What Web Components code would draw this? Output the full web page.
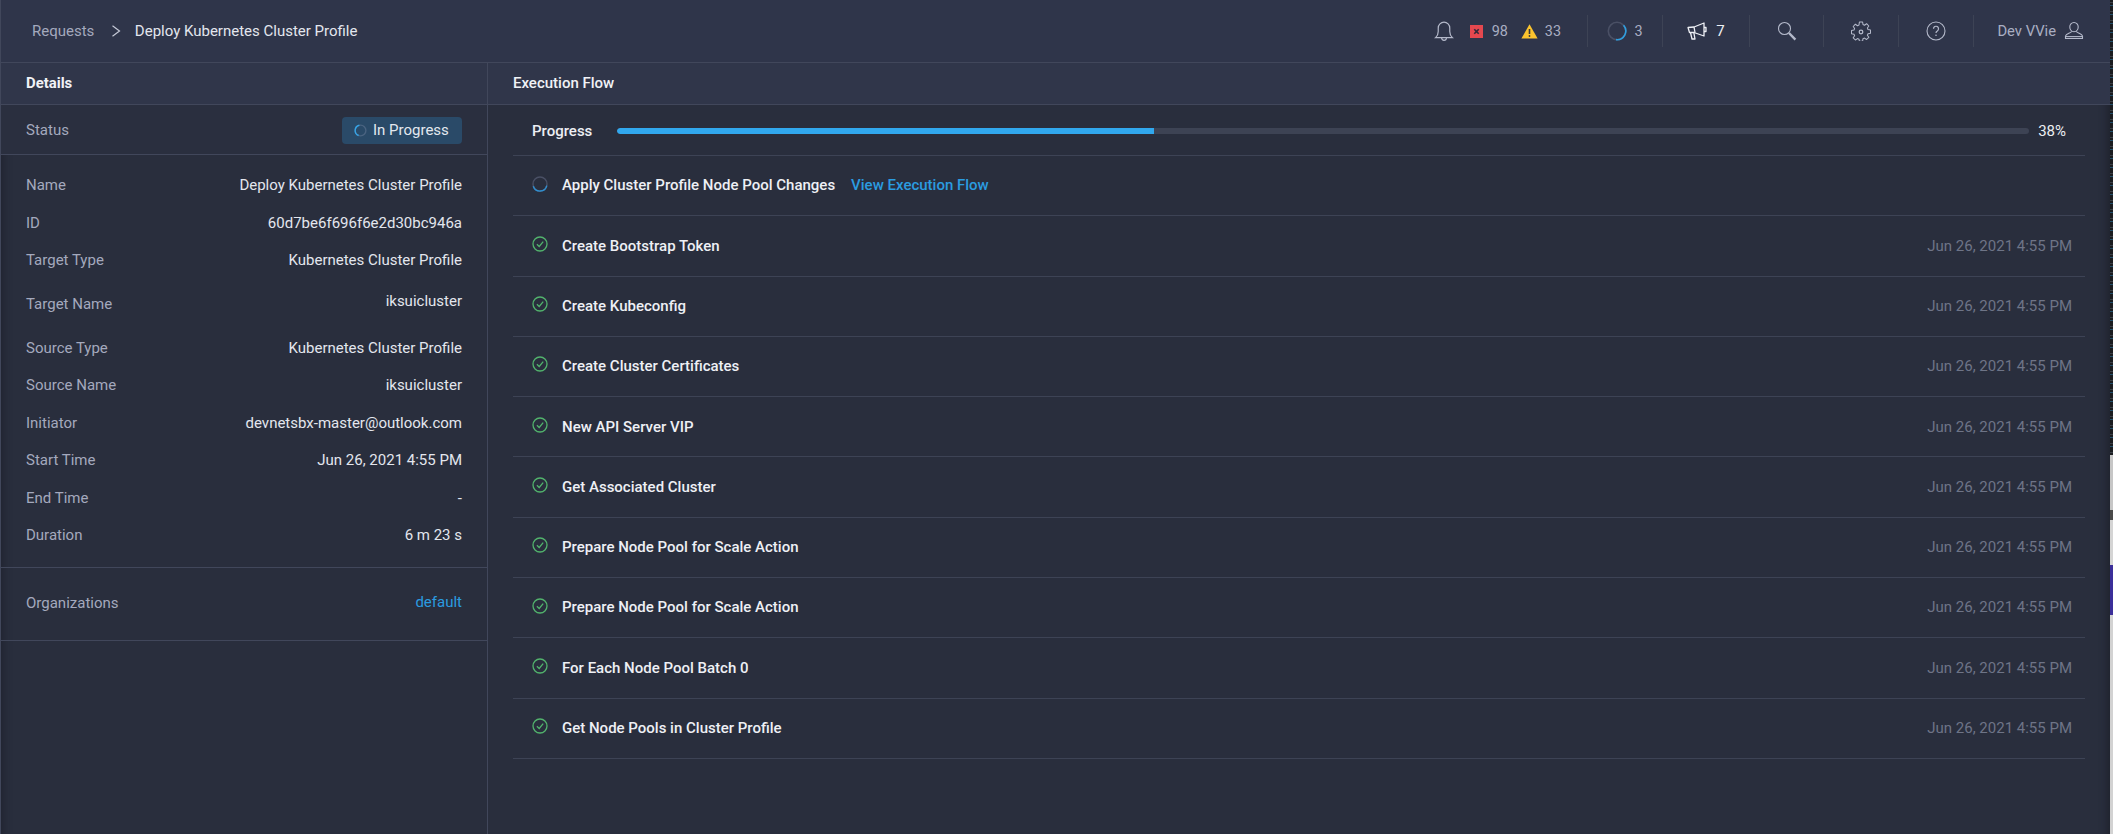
<!DOCTYPE html>
<html><head><meta charset="utf-8"><title>Request</title>
<style>
html,body{margin:0;height:100%;background:#292e3d;overflow:hidden}
body{font-family:Roboto,"Liberation Sans",sans-serif;font-size:15px;color:#e3e6ee}
</style></head><body>
<x-app>
  <x-topbar slot="top">
    <x-crumbs><span slot="parent">Requests</span><span slot="current">Deploy Kubernetes Cluster Profile</span></x-crumbs>
    <x-tool slot="tools" w="166" end style="padding-right:26px">
      <x-icon name="bell" size="24" style="color:#b4b9ca;margin-right:14px"></x-icon>
      <x-icon name="err" size="13" style="margin-right:9px"></x-icon><span style="margin-right:13px">98</span>
      <x-icon name="warn" size="17" style="margin-right:7px"></x-icon><span>33</span>
    </x-tool>
    <x-tool slot="tools" w="75" sep><x-icon name="spin" size="20" style="margin-right:7px"></x-icon><span>3</span></x-tool>
    <x-tool slot="tools" w="87" sep><x-icon name="mega" size="20" style="margin-right:9px;color:#eef0f5"></x-icon><span style="color:#eef0f5;font-size:15px">7</span></x-tool>
    <x-tool slot="tools" w="74" sep><x-icon name="search" size="20" style="color:#b4b9ca"></x-icon></x-tool>
    <x-tool slot="tools" w="75" sep><x-icon name="gear" size="20" style="color:#b4b9ca"></x-icon></x-tool>
    <x-tool slot="tools" w="75" sep><x-icon name="help" size="20" style="color:#b4b9ca"></x-icon></x-tool>
    <x-tool slot="tools" w="115" sep end style="padding-right:4px"><span style="margin-right:8px;font-size:14.800px">Dev VVie</span><x-icon name="user" size="20" style="color:#b4b9ca"></x-icon></x-tool>
  </x-topbar>

  <x-details slot="left">
    <x-head><b style="font-weight:700;font-size:14.900px">Details</b></x-head>
    <x-status-row><x-badge>In Progress</x-badge></x-status-row>
    <x-list>
      <x-kv k="Name">Deploy Kubernetes Cluster Profile</x-kv>
      <x-kv k="ID">60d7be6f696f6e2d30bc946a</x-kv>
      <x-kv k="Target Type">Kubernetes Cluster Profile</x-kv>
      <x-kv k="Target Name" tall>iksuicluster</x-kv>
      <x-kv k="Source Type">Kubernetes Cluster Profile</x-kv>
      <x-kv k="Source Name">iksuicluster</x-kv>
      <x-kv k="Initiator">devnetsbx-master@outlook.com</x-kv>
      <x-kv k="Start Time">Jun 26, 2021 4:55 PM</x-kv>
      <x-kv k="End Time">-</x-kv>
      <x-kv k="Duration">6 m 23 s</x-kv>
    </x-list>
    <x-org>default</x-org>
  </x-details>

  <x-flow slot="right">
    <x-head><span style="font-weight:500">Execution Flow</span></x-head>
    <x-flow-body>
      <x-progress value="38"></x-progress>
      <x-step running link="View Execution Flow">Apply Cluster Profile Node Pool Changes</x-step>
      <x-step time="Jun 26, 2021 4:55 PM">Create Bootstrap Token</x-step>
      <x-step time="Jun 26, 2021 4:55 PM">Create Kubeconfig</x-step>
      <x-step time="Jun 26, 2021 4:55 PM">Create Cluster Certificates</x-step>
      <x-step time="Jun 26, 2021 4:55 PM">New API Server VIP</x-step>
      <x-step time="Jun 26, 2021 4:55 PM">Get Associated Cluster</x-step>
      <x-step time="Jun 26, 2021 4:55 PM">Prepare Node Pool for Scale Action</x-step>
      <x-step time="Jun 26, 2021 4:55 PM">Prepare Node Pool for Scale Action</x-step>
      <x-step time="Jun 26, 2021 4:55 PM">For Each Node Pool Batch 0</x-step>
      <x-step time="Jun 26, 2021 4:55 PM">Get Node Pools in Cluster Profile</x-step>
    </x-flow-body>
  </x-flow>
</x-app>
<script>
const ICONS={
 bell:'<svg viewBox="0 0 20 20" fill="none" stroke="currentColor" stroke-width="1"><path d="M3 15.500c1.500-1.300 2.200-2.600 2.200-5V7.400a4.800 4.800 0 0 1 9.600 0v3.100c0 2.400.7 3.700 2.200 5z"/><path d="M8 15.700a2 2 0 0 0 4 .1"/></svg>',
 err:'<svg viewBox="0 0 14 14"><rect width="14" height="14" fill="#e5484f"/><path d="M4.600 4.600l4.800 4.800M9.400 4.600L4.600 9.400" stroke="#33293a" stroke-width="1.800"/></svg>',
 warn:'<svg viewBox="0 0 17 17"><path d="M8.500 1.200L16.600 15.500H.4z" fill="#fcc42e"/><path d="M8.500 6v5" stroke="#3a3a3a" stroke-width="1.600"/><circle cx="8.500" cy="13" r=".9" fill="#3a3a3a"/></svg>',
 spin:'<svg viewBox="0 0 20 20" fill="none" stroke-width="1.600"><circle cx="10" cy="10" r="8.700" stroke="#4a5065"/><path d="M16.600 4.300A8.700 8.700 0 0 1 9 18.650" stroke="#2f9fe0"/></svg>',
 mega:'<svg viewBox="0 0 20 20" fill="none" stroke="currentColor" stroke-width="1.300" stroke-linejoin="round"><path d="M1 6.500L7 6l10-4v13L7 11.500H2.500z"/><path d="M7 6l1 5.500M3.500 11.500L5 18h3L6.800 11.500"/><path d="M17 6.500h2v4h-2"/></svg>',
 search:'<svg viewBox="0 0 20 20" fill="none" stroke="currentColor"><circle cx="7.500" cy="7.500" r="6" stroke-width="1.100"/><path d="M12 12l6.400 6.600" stroke-width="2.400"/></svg>',
 gear:'<svg viewBox="0 0 20 20" fill="none" stroke="currentColor" stroke-width="1.050" stroke-linejoin="round"><path d="M8.400 1h3.200l.4 2.500 1.500.7 2.100-1.500 2.200 2.300-1.400 2 .6 1.600 2.500.5v3.100l-2.500.5-.6 1.500 1.400 2.100-2.200 2.200-2.100-1.400-1.500.6-.4 2.500H8.400L8 18.200l-1.500-.6-2.100 1.400-2.200-2.200 1.400-2.100-.6-1.500-2.500-.5V9.600l2.500-.5.6-1.600-1.400-2 2.200-2.300 2.100 1.500 1.500-.7z"/><circle cx="10" cy="11" r="1.800" stroke-width="1.300"/></svg>',
 help:'<svg viewBox="0 0 20 20" fill="none" stroke="currentColor" stroke-width="1.100"><circle cx="10" cy="10" r="9"/><path d="M7.500 7.700a2.500 2.500 0 1 1 3.800 2.200c-.9.500-1.300 1-1.300 2" stroke-width="1.200"/><circle cx="10" cy="14.300" r=".8" fill="currentColor" stroke="none"/></svg>',
 user:'<svg viewBox="0 0 20 20" fill="none" stroke="currentColor" stroke-width="1.100"><path d="M10 1.500a4.200 4.200 0 0 1 4.200 4.500c0 2.300-1.600 4.700-4.200 4.700S5.800 8.300 5.800 6A4.200 4.200 0 0 1 10 1.500z"/><path d="M7.600 10.200c0 2-5.600 2.300-6.100 4.800v2.500h17V15c-.5-2.500-6.100-2.800-6.100-4.800"/><path d="M1.500 15.600h17"/></svg>',
 ok:'<svg viewBox="0 0 16 16" fill="none" stroke="#52b36d" stroke-width="1.300"><circle cx="8" cy="8" r="7"/><path d="M4.900 8.300l2.300 2.200 4-4.800"/></svg>',
 run:'<svg viewBox="0 0 16 16" fill="none" stroke-width="1.400"><circle cx="8" cy="8" r="7" stroke="#4a5065"/><path d="M1.300 10.200A7 7 0 0 0 14.800 9.600" stroke="#2f8fd0"/></svg>',
 badge:'<svg viewBox="0 0 14 14" fill="none" stroke-width="1.500"><circle cx="7" cy="7" r="5.800" stroke="#4a6380"/><path d="M5.800 1.300A5.800 5.800 0 0 0 5 12.400" stroke="#35a5e8"/></svg>',
 chev:'<svg viewBox="0 0 12 12" fill="none" stroke="currentColor" stroke-width="1.200"><path d="M2.500.8L9.500 6 2.500 11.200"/></svg>'
};
function def(name,css,html,init){
  customElements.define(name,class extends HTMLElement{
    connectedCallback(){
      if(this.shadowRoot)return;
      const r=this.attachShadow({mode:'open'});
      r.innerHTML='<style>'+css+'</style>'+(typeof html==='function'?html(this):html);
      if(init)init(this,r);
    }
  });
}
const esc=s=>String(s||'').replace(/&/g,'&amp;').replace(/</g,'&lt;');
def('x-icon',':host{display:inline-flex;flex:none}svg{display:block;width:100%;height:100%}','',(h,r)=>{
  const s=h.getAttribute('size')||16;h.style.width=h.style.height=s+'px';
  r.innerHTML+=ICONS[h.getAttribute('name')]||'';
});
def('x-app',`:host{display:grid;height:100vh;grid-template-columns:487px 1fr 3px;grid-template-rows:63px 1fr;border-left:1px solid #41475b;box-sizing:border-box}
 .edge{grid-column:3;grid-row:1/3;background:repeating-linear-gradient(#1b1d21 0 2px,#3a3f46 2px 3px,#1b1d21 3px 5px,#23506c 5px 6px,#1b1d21 6px 9px);overflow:hidden}
 .low{height:100%;margin-top:455px;background:linear-gradient(#c6c6c6 0 55px,#4a4a4a 55px 65px,#d4d4d4 65px 110px,#3b2e99 110px 160px,#d2d2d2 160px)}
 ::slotted([slot=left]){grid-row:2;grid-column:1}::slotted([slot=right]){grid-row:2;grid-column:2}
 ::slotted([slot=top]){grid-column:1/3;grid-row:1}`,
 '<slot name="top"></slot><slot name="left"></slot><slot name="right"></slot><div class="edge"><div class="low"></div></div>');
def('x-topbar',`:host{display:flex;align-items:center;height:63px;box-sizing:border-box;background:#2f354a;border-bottom:1px solid #41475b;padding-right:22px;padding-left:31px}
 .s{flex:1}.t{display:flex;align-items:center}`,
 '<slot></slot><div class="s"></div><div class="t"><slot name="tools"></slot></div>');
def('x-crumbs',`:host{display:flex;align-items:center;font-size:15px;color:#e3e6ee}
 ::slotted([slot=parent]){color:#a4a9bd}x-icon{margin:0 12.500px 0 16px;color:#c5c9d6}`,
 '<slot name="parent"></slot><x-icon name="chev" size="12"></x-icon><slot name="current"></slot>');
def('x-tool',`:host{display:flex;align-items:center;justify-content:center;height:32px;box-sizing:border-box;font-size:14.400px;color:#a9aec2}
 :host([end]){justify-content:flex-end}
 :host([sep]){border-left:1px solid #3d4355}`,'<slot></slot>',h=>{h.style.width=h.getAttribute('w')+'px'});
const shadow='inset 10px 0 8px -8px rgba(20,22,30,.45)';
def('x-head',`:host{display:flex;align-items:center;height:42px;box-sizing:border-box;background:#30364a;border-bottom:1px solid #41475b;padding:0 0 1px 25px;font-size:15px;color:#f0f2f6}`,'<slot></slot>');
def('x-details',`:host{display:block;border-right:1px solid #41475b;box-shadow:${shadow};background:#292e3d;height:100%;box-sizing:content-box;width:486px}`,'<slot></slot>');
def('x-status-row',`:host{display:flex;align-items:center;justify-content:space-between;height:50px;box-sizing:border-box;padding:1px 25px 0;border-bottom:1px solid #41475b;font-size:15px;color:#a4a9bd;background:#2a2f3f}`,'<span>Status</span><slot></slot>');
def('x-badge',`:host{display:flex;align-items:center;height:27px;width:120px;box-sizing:border-box;background:#2a4a68;border-radius:4px;padding-left:12px;color:#e3e8ef;font-size:15px}x-icon{margin-right:6px}`,
 '<x-icon name="badge" size="13"></x-icon><slot></slot>');
def('x-list',`:host{display:block;padding:11.500px 25px 12.500px;border-bottom:1px solid #41475b}`,'<slot></slot>');
def('x-kv',`:host{display:flex;justify-content:space-between;align-items:center;height:37.500px;font-size:15px;color:#e3e6ee}
 :host([tall]){height:50px}.k{color:#a4a9bd}
 :host([tall]) .v{margin-top:-6px}`,
 h=>`<span class="k">${esc(h.getAttribute('k'))}</span><span class="v"><slot></slot></span>`);
def('x-org',`:host{display:flex;justify-content:space-between;align-items:center;height:73px;box-sizing:border-box;padding:0 25px 2px;border-bottom:1px solid #41475b;font-size:15px;color:#a4a9bd}.v{color:#2b9ce0;margin-top:-2px}`,
 '<span>Organizations</span><span class="v"><slot></slot></span>');
def('x-flow',`:host{display:block;min-width:0;height:100%;background:#292e3d;box-shadow:inset -10px 0 8px -8px rgba(20,22,30,.55)}`,'<slot></slot>');
def('x-flow-body',`:host{display:block;padding:0 25px}`,'<slot></slot>');
def('x-progress',`:host{display:flex;align-items:center;height:51px;box-sizing:border-box;border-bottom:1px solid #3d4355;padding:2px 0 0 19px;font-size:15px;color:#eceef3;font-weight:500}
 .l{width:85px}.t{flex:1;height:6px;border-radius:3px;background:#3d4354;overflow:hidden}.f{height:100%;background:#31a8ee;border-radius:3px 0 0 3px}
 .v{width:56px;text-align:right;padding-right:19px;box-sizing:border-box;font-weight:400}`,
 h=>{const v=h.getAttribute('value');return `<span class="l">Progress</span><div class="t"><div class="f" style="width:${v}%"></div></div><span class="v">${v}%</span>`});
def('x-step',`:host{display:flex;align-items:center;height:60.300px;box-sizing:border-box;border-bottom:1px solid #3d4355;padding:0 13px .6px 19px;font-size:15px}
 x-icon{margin:-3.500px 14px 0 0}.n{font-weight:500;color:#eef0f5}.a{color:#2b9ce0;font-weight:500;margin-left:16px}.s{flex:1}.d{color:#6e7487}.txt{display:flex}`,
 h=>{const link=h.getAttribute('link'),t=h.getAttribute('time');
   return `<x-icon name="${h.hasAttribute('running')?'run':'ok'}" size="16"></x-icon><div class="txt"><span class="n"><slot></slot></span>${link?`<span class="a">${esc(link)}</span>`:''}</div><div class="s"></div>${t?`<span class="d">${esc(t)}</span>`:''}`});
</script>
</body></html>
